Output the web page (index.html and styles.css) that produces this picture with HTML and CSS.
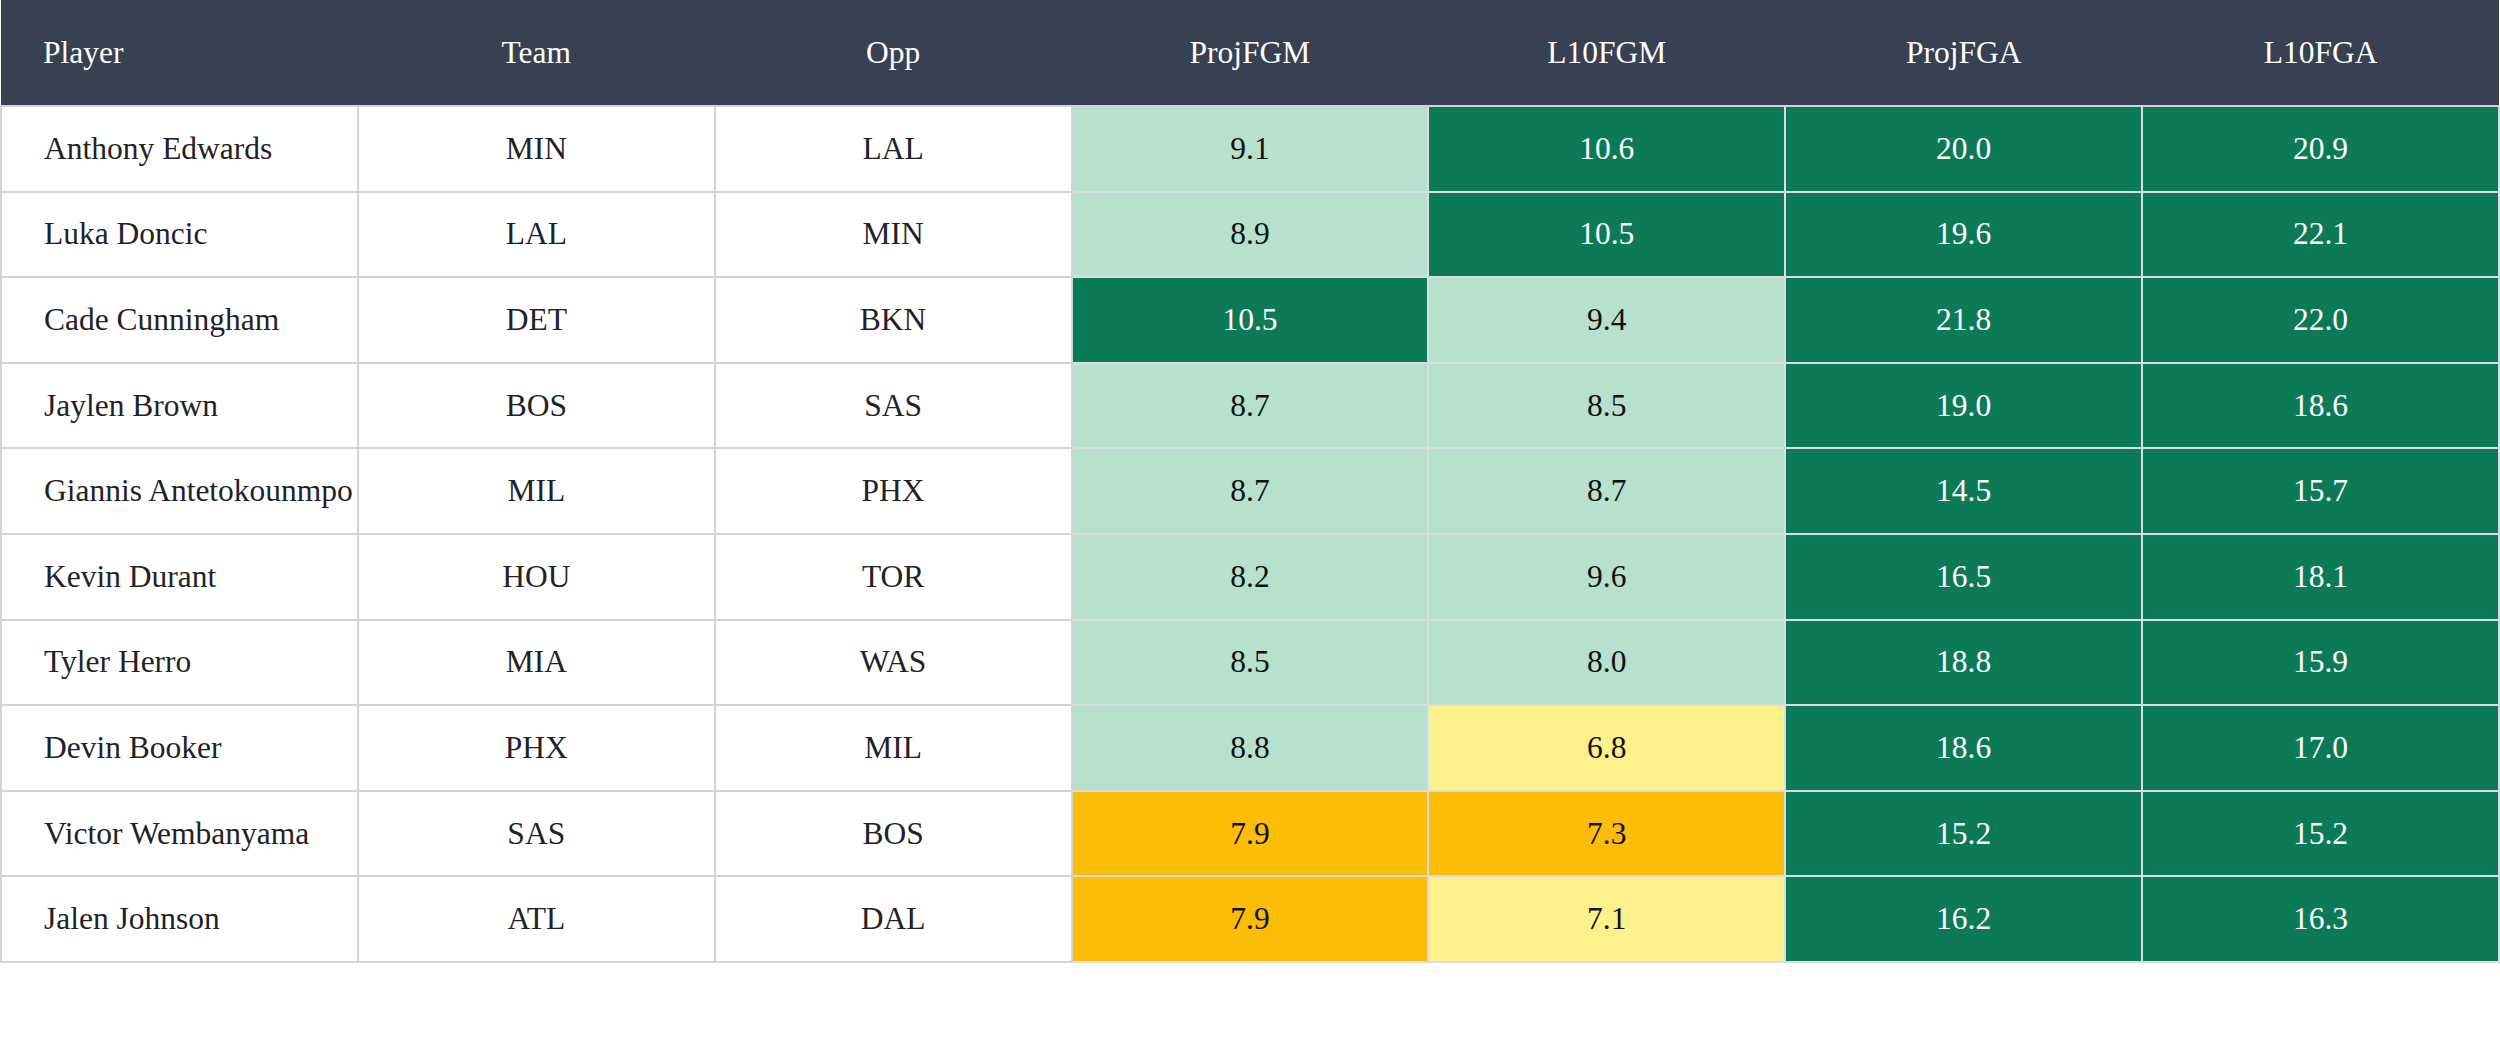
FILE: index.html
```html
<!DOCTYPE html>
<html>
<head>
<meta charset="utf-8">
<link rel="stylesheet" href="styles.css">
</head>
<body>
<table class="stats">
  <thead>
    <tr>
      <th class="player">Player</th>
      <th>Team</th>
      <th>Opp</th>
      <th>ProjFGM</th>
      <th>L10FGM</th>
      <th>ProjFGA</th>
      <th>L10FGA</th>
    </tr>
  </thead>
  <tbody>
    <tr><td class="player">Anthony Edwards</td><td>MIN</td><td>LAL</td><td class="lg">9.1</td><td class="dg">10.6</td><td class="dg">20.0</td><td class="dg">20.9</td></tr>
    <tr><td class="player">Luka Doncic</td><td>LAL</td><td>MIN</td><td class="lg">8.9</td><td class="dg">10.5</td><td class="dg">19.6</td><td class="dg">22.1</td></tr>
    <tr><td class="player">Cade Cunningham</td><td>DET</td><td>BKN</td><td class="dg">10.5</td><td class="lg">9.4</td><td class="dg">21.8</td><td class="dg">22.0</td></tr>
    <tr><td class="player">Jaylen Brown</td><td>BOS</td><td>SAS</td><td class="lg">8.7</td><td class="lg">8.5</td><td class="dg">19.0</td><td class="dg">18.6</td></tr>
    <tr><td class="player">Giannis Antetokounmpo</td><td>MIL</td><td>PHX</td><td class="lg">8.7</td><td class="lg">8.7</td><td class="dg">14.5</td><td class="dg">15.7</td></tr>
    <tr><td class="player">Kevin Durant</td><td>HOU</td><td>TOR</td><td class="lg">8.2</td><td class="lg">9.6</td><td class="dg">16.5</td><td class="dg">18.1</td></tr>
    <tr><td class="player">Tyler Herro</td><td>MIA</td><td>WAS</td><td class="lg">8.5</td><td class="lg">8.0</td><td class="dg">18.8</td><td class="dg">15.9</td></tr>
    <tr><td class="player">Devin Booker</td><td>PHX</td><td>MIL</td><td class="lg">8.8</td><td class="yl">6.8</td><td class="dg">18.6</td><td class="dg">17.0</td></tr>
    <tr><td class="player">Victor Wembanyama</td><td>SAS</td><td>BOS</td><td class="or">7.9</td><td class="or">7.3</td><td class="dg">15.2</td><td class="dg">15.2</td></tr>
    <tr><td class="player">Jalen Johnson</td><td>ATL</td><td>DAL</td><td class="or">7.9</td><td class="yl">7.1</td><td class="dg">16.2</td><td class="dg">16.3</td></tr>
  </tbody>
</table>
</body>
</html>
```

FILE: styles.css
```css
html, body {
  margin: 0;
  padding: 0;
  background: #ffffff;
}

body {
  font-family: "Liberation Serif", "DejaVu Serif", serif;
  font-size: 31.5px;
  color: #1f2328;
}

.stats {
  width: 2500px;
  table-layout: fixed;
  border-collapse: collapse;
}

.stats th {
  background: #374151;
  color: #ffffff;
  font-weight: 400;
  height: 105px;
  padding: 0 12px;
  text-align: center;
  vertical-align: middle;
  border-bottom: 2px solid #d1d5db;
}

.stats td {
  height: 83.6px;
  padding: 0 12px;
  text-align: center;
  vertical-align: middle;
  border: 2px solid #d1d5db;
  white-space: nowrap;
  overflow: visible;
}

.stats .player {
  text-align: left;
  padding-left: 42px;
}

.stats td.lg {
  background: #b7e1cd;
  color: #111111;
  border-color: #d8dde3;
}

.stats td.dg {
  background: #0c7a57;
  color: #ffffff;
  border-color: #d8dde3;
}

.stats td.yl {
  background: #fef08a;
  color: #111111;
  border-color: #d8dde3;
}

.stats td.or {
  background: #fbbd08;
  color: #111111;
  border-color: #d8dde3;
}
```
